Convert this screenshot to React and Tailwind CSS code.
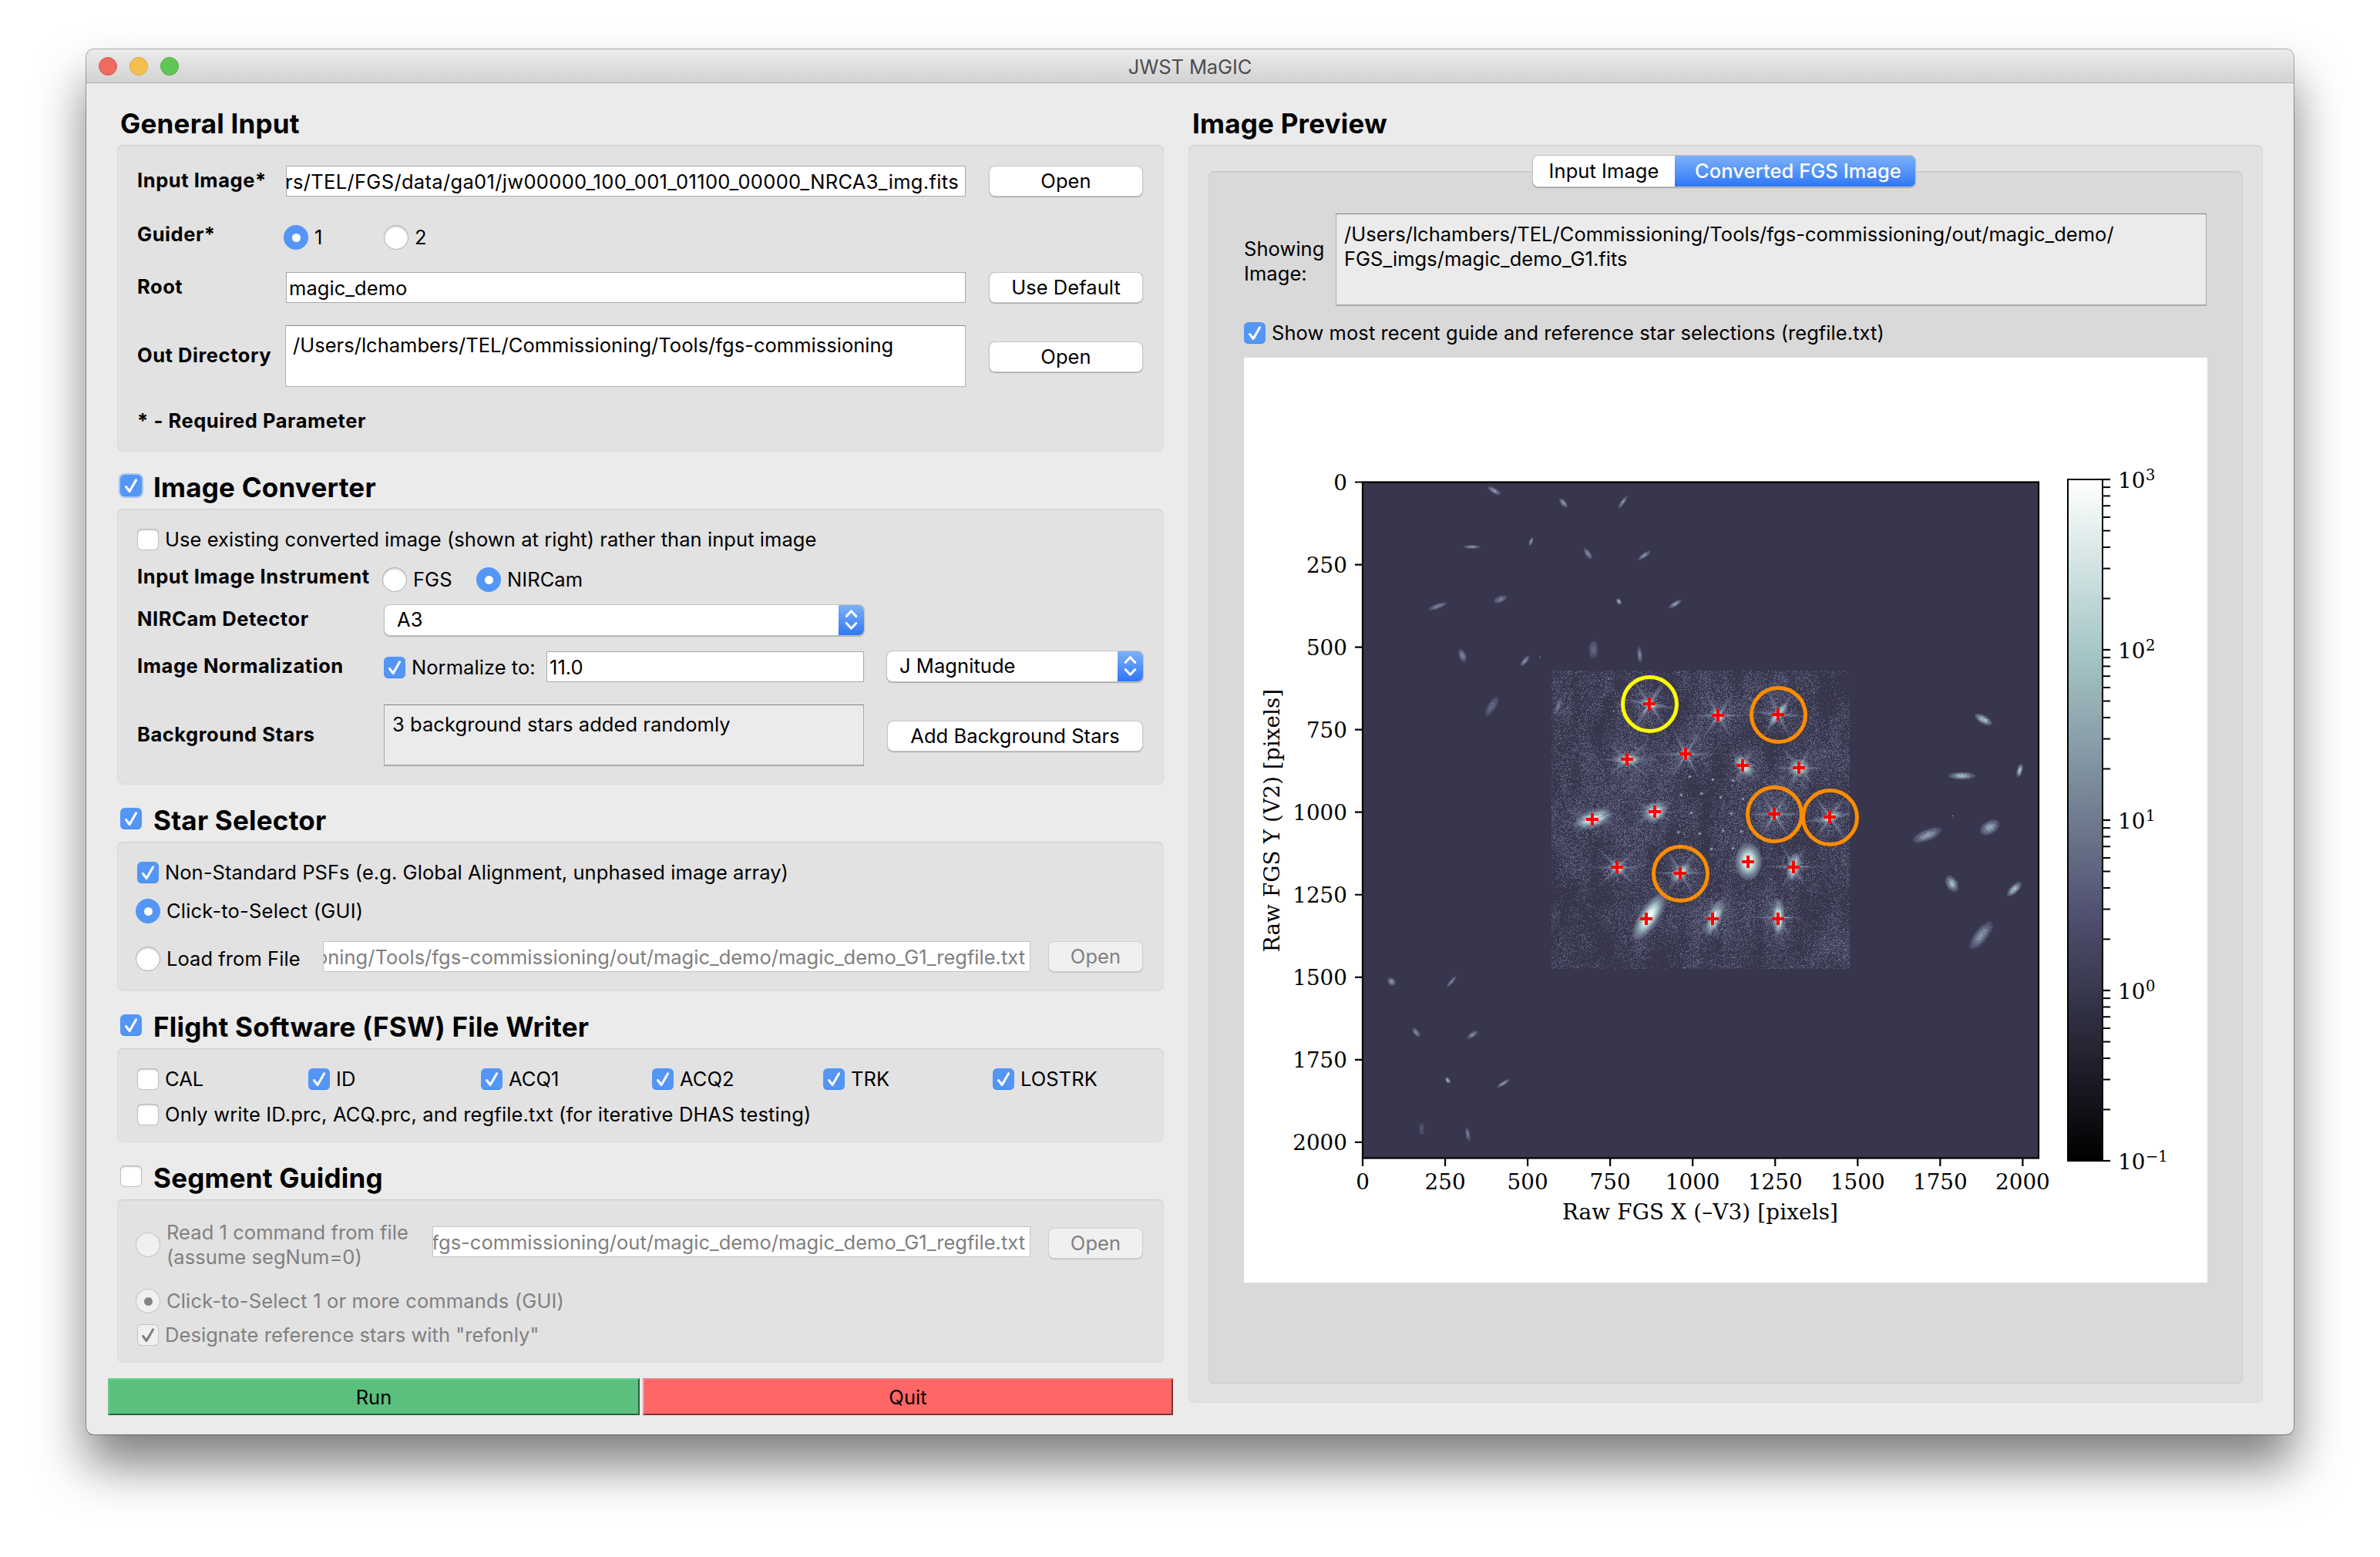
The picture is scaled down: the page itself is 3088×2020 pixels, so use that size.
import React from "react";

/* ---------- procedural star field ---------- */

const clamp = (v, lo, hi) => Math.max(lo, Math.min(hi, v));

function bone(t) {
  const lerp = (pts) => {
    for (let i = 1; i < pts.length; i++) {
      if (t <= pts[i][0]) {
        const [x0, y0] = pts[i - 1];
        const [x1, y1] = pts[i];
        return Math.round((y0 + ((t - x0) / (x1 - x0)) * (y1 - y0)) * 255);
      }
    }
    return 255;
  };
  const r = lerp([[0, 0], [0.746, 0.652], [1, 1]]);
  const g = lerp([[0, 0], [0.365, 0.319], [0.746, 0.777], [1, 1]]);
  const b = lerp([[0, 0], [0.365, 0.444], [1, 1]]);
  return `rgb(${r},${g},${b})`;
}

function hash(x, y) {
  let h = (x * 374761393 + y * 668265263) | 0;
  h = Math.imul(h ^ (h >>> 13), 1274126177);
  h ^= h >>> 16;
  return (h >>> 0) / 4294967296;
}

function smooth(x, y) {
  const xi = Math.floor(x);
  const yi = Math.floor(y);
  const fx = x - xi;
  const fy = y - yi;
  const sx = fx * fx * (3 - 2 * fx);
  const sy = fy * fy * (3 - 2 * fy);
  const a = hash(xi, yi);
  const b = hash(xi + 1, yi);
  const c = hash(xi, yi + 1);
  const d = hash(xi + 1, yi + 1);
  return a + (b - a) * sx + (c - a) * sy + (a - b - c + d) * sx * sy;
}

// x, y, long radius, short radius, rotation, peak, spike angles, spike length
const SEGMENTS = [
  [2140, 913, 11, 4.5, 18, 0.95, [-60, 55, 10, 125], 19],
  [2229, 928, 9, 6.5, 40, 0.95, [-55, 60, 0, 125], 17],
  [2307, 926, 16, 5.5, -52, 0.95, [-55, 65, 5], 18],
  [2111, 985, 16, 6, 0, 0.97, [0, 40, -40], 17],
  [2187, 978, 9, 5.5, 80, 0.85, [-58, 62, 0], 19],
  [2262, 993, 14, 8, 50, 0.95, [50, -60, 110], 14],
  [2334, 996, 12.5, 10.5, 0, 0.9, [50, -60, 0, 115], 16],
  [2067, 1062, 22, 9.5, -18, 0.97, [-15, 15, -40], 16],
  [2147, 1053, 14, 11, -25, 0.97, [-30, 30, 0], 15],
  [2302, 1056, 8, 6, 60, 0.85, [58, -58, 0, 122], 19],
  [2374, 1060, 14, 5.5, -22, 0.92, [55, -55, -10], 19],
  [2098, 1125, 9.5, 7.5, 20, 0.92, [45, -45, 0], 16],
  [2180, 1132, 13.5, 7, -42, 0.93, [-55, 60, 0], 17],
  [2268, 1117, 18, 13, 90, 1.01, [90, 60], 8],
  [2327, 1124, 16, 7.5, -80, 0.95, [0, -60, 60], 17],
  [2139, 1189, 26, 9.5, -58, 1.01, [-58], 14],
  [2224, 1190, 20, 8, -68, 0.98, [-65, 80, -50], 16],
  [2307, 1190, 20, 7, 90, 0.98, [80, 100, 0, 60], 16],
];

// x, y, long radius, short radius, rotation, brightness
const SMUDGES = [
  [1938, 636, 8, 3, 30, 0.66], [2028, 652, 6, 3, 50, 0.66], [2105, 651, 8, 2, -55, 0.68],
  [1909, 709, 9, 2, 0, 0.64], [1986, 702, 5, 2, -70, 0.7], [2060, 718, 7, 3, 55, 0.62],
  [2133, 720, 8, 2.5, -35, 0.66], [1865, 786, 11, 3, -20, 0.58], [1946, 777, 8, 4, -20, 0.54],
  [2100, 780, 4, 2.5, 60, 0.74], [2173, 783, 8, 2.5, -32, 0.68], [1897, 850, 7, 4, 70, 0.62],
  [1978, 857, 7, 2.5, -50, 0.66], [2067, 842, 11, 6, 90, 0.45], [2127, 849, 9, 3, 85, 0.58],
  [1935, 916, 14, 5, -58, 0.47], [2021, 916, 10, 3, -72, 0.55], [2573, 933, 10, 4.5, 30, 0.84],
  [2545, 1006, 14, 4, 0, 0.78], [2620, 999, 7, 3, -75, 0.86], [2500, 1083, 16, 6, -22, 0.68],
  [2581, 1073, 11, 7, -30, 0.73], [2532, 1146, 9, 6, 60, 0.8], [2613, 1153, 10, 4.5, -45, 0.8],
  [2570, 1213, 18, 7, -52, 0.64], [1805, 1273, 5, 4, 40, 0.66], [1883, 1273, 8, 2, -50, 0.62],
  [1837, 1339, 6, 3, 50, 0.62], [1910, 1342, 7, 3, -35, 0.6], [1878, 1401, 4, 2.5, 60, 0.7],
  [1950, 1405, 8, 2, -32, 0.68], [1844, 1464, 9, 4, 90, 0.38], [1904, 1471, 8, 2.5, 80, 0.56],
];

const DOTS = [
  [2192, 1007], [2222, 1011], [2248, 1012], [2181, 1031], [2207, 1029], [2232, 1034], [2261, 1036],
  [2194, 1054], [2246, 1055], [2177, 1079], [2205, 1081], [2235, 1077], [2259, 1078], [2220, 1101], [2248, 1100],
];

const HOT = [
  [2093, 922], [2220, 950], [2319, 983], [2247, 1019], [2100, 1038], [2104, 1089], [2185, 1082],
  [2200, 1128], [2315, 1112], [2353, 1226], [2393, 1231], [2181, 1237], [1998, 852], [2533, 1058],
];

const GRID = { x0: 2013, y0: 870, x1: 2400, y1: 1257 };

function rotated(x, y, cx, cy, deg) {
  const a = (deg * Math.PI) / 180;
  const dx = x - cx;
  const dy = y - cy;
  return [dx * Math.cos(a) + dy * Math.sin(a), -dx * Math.sin(a) + dy * Math.cos(a)];
}

function detectorValue(x, y) {
  const n = hash(x, y);
  const m = hash(x + 977, y + 313);
  const cloud = smooth(x / 14, y / 34) * 0.55 + smooth(x / 40 + 9, y / 56 + 3) * 0.45;
  let t = 0.25;
  const density = clamp((cloud - 0.24) * 0.9, 0.04, 0.55);
  if (n < density) t = 0.31 + m * 0.17;
  for (const [cx, cy, a, b, rot, peak, spikes, len] of SEGMENTS) {
    const dx = x - cx;
    const dy = y - cy;
    const d2 = dx * dx + dy * dy;
    if (d2 > 1900) continue;
    const [u, v] = rotated(x, y, cx, cy, rot);
    const q = (u * u) / (a * a) + (v * v) / (b * b);
    const solid = peak > 1;
    const grain = solid
      ? 0.96 - 0.08 * n
      : 0.64 + 0.36 * smooth(u / 5 + cx, v / 1.6 + cy) - 0.25 * n * Math.min(1, q);
    const body = 0.25 + (peak - 0.18) * Math.exp(-q) * grain;
    if (body > t && body > 0.38) t = body;
    const d = Math.sqrt(d2);
    for (const s of spikes) {
      const [, p] = rotated(x, y, cx, cy, s);
      const w = 0.85 * Math.exp(-d / len) * Math.exp(-Math.abs(p) / (1.3 + d * 0.05)) * (0.35 + 0.65 * n);
      if (0.25 + w > t && w > 0.09) t = 0.25 + w;
    }
    const halo = 0.36 * Math.exp(-d / 16);
    if (m < halo * 2 && 0.36 + halo * n > t) t = 0.36 + halo * n;
  }
  for (const [cx, cy] of DOTS) {
    const d2 = (x - cx) ** 2 + (y - cy) ** 2;
    if (d2 < 5) t = Math.max(t, 0.62 - d2 * 0.05);
  }
  return t;
}

function buildField() {
  const levels = 22;
  const paths = Array.from({ length: levels + 1 }, () => []);
  const put = (x, y, w, l) => paths[l].push(`M${x} ${y}h${w}v1h-${w}z`);
  const toLevel = (t) => clamp(Math.round(t * levels), 0, levels);
  for (let y = GRID.y0; y < GRID.y1; y++) {
    let run = -1;
    let start = GRID.x0;
    for (let x = GRID.x0; x <= GRID.x1; x++) {
      const t = x < GRID.x1 ? detectorValue(x, y) : 0;
      const l = t > 0.29 ? toLevel(t) : -1;
      if (l !== run) {
        if (run >= 0) put(start, y, x - start, run);
        run = l;
        start = x;
      }
    }
  }
  for (const [cx, cy, a, b, rot, peak] of SMUDGES) {
    const r = Math.ceil(a) + 3;
    for (let y = cy - r; y <= cy + r; y++) {
      for (let x = cx - r; x <= cx + r; x++) {
        const [u, v] = rotated(x, y, cx, cy, rot);
        const q = (u * u) / (a * a) + (v * v) / (b * b);
        const n = hash(x, y);
        const t = 0.25 + (peak - 0.22) * Math.exp(-q * 1.1) * (0.6 + 0.4 * n);
        if (q < 1.6 && t > 0.31) put(x, y, 1, toLevel(t));
      }
    }
  }
  for (const [x, y] of HOT) put(x, y, 1, 19);
  return paths
    .map((p, i) => ({ d: p.join(""), fill: bone(i / levels) }))
    .filter((p) => p.d);
}

const FIELD = buildField();

const CROSSES = [
  [2140, 913], [2229, 928], [2307, 927], [2111, 985], [2187, 978], [2261, 993], [2334, 996],
  [2066, 1063], [2147, 1053], [2302, 1056], [2374, 1060], [2098, 1125], [2180, 1133], [2268, 1118],
  [2327, 1125], [2136, 1192], [2222, 1192], [2307, 1192],
];

const RINGS = [
  [2140.5, 913.5, "#ffff00"], [2307.5, 927.5, "#ff8c00"], [2302.5, 1056.5, "#ff8c00"],
  [2374.5, 1060.5, "#ff8c00"], [2180.5, 1133.5, "#ff8c00"],
];

const TICKS = [0, 250, 500, 750, 1000, 1250, 1500, 1750, 2000];
const DECADES = [3, 2, 1, 0, -1];

function Plot() {
  const px = (v) => 1768 + v * 0.4282;
  const py = (v) => 625.5 + v * 0.4282;
  const minor = [];
  for (let d = 0; d < 4; d++) {
    for (let k = 2; k < 10; k++) minor.push(1506 - (d + Math.log10(k)) * 221);
  }
  return (
    <svg
      viewBox="1614 464 1250 1200"
      className="block h-[1200px] w-[1250px] bg-white font-['DejaVu_Serif',serif] text-[27.8px] tracking-normal"
    >
      <defs>
        <linearGradient id="bone" x1="0" y1="1" x2="0" y2="0">
          <stop offset="0" stopColor="#000" />
          <stop offset="0.365" stopColor="rgb(81,81,113)" />
          <stop offset="0.746" stopColor="rgb(166,198,198)" />
          <stop offset="1" stopColor="#fff" />
        </linearGradient>
      </defs>
      <rect x="1768" y="625.5" width="877" height="877" fill="#38364c" />
      <g shapeRendering="crispEdges">
        {FIELD.map((p) => (
          <path key={p.fill} d={p.d} fill={p.fill} />
        ))}
      </g>
      {CROSSES.map(([x, y]) => (
        <path key={`${x}-${y}`} d={`M${x - 8} ${y}h16M${x} ${y - 8}v16`} stroke="#ff0000" strokeWidth="4" />
      ))}
      {RINGS.map(([x, y, c]) => (
        <circle key={`${x}-${y}`} cx={x} cy={y} r="35" fill="none" stroke={c} strokeWidth="5" />
      ))}
      <rect x="1768" y="625.5" width="877" height="877" fill="none" stroke="#000" strokeWidth="2.2" />
      {TICKS.map((t) => (
        <g key={t}>
          <path d={`M${px(t)} 1503v10M1768 ${py(t)}h-10`} stroke="#000" strokeWidth="2.2" />
          <text x={px(t)} y="1543" textAnchor="middle">{t}</text>
          <text x="1748" y={py(t) + 10} textAnchor="end">{t}</text>
        </g>
      ))}
      <text x="2206" y="1582" textAnchor="middle" letterSpacing="0.15">Raw FGS X (–V3) [pixels]</text>
      <text transform="translate(1660 1064.5) rotate(-90)" textAnchor="middle" letterSpacing="0.1">Raw FGS Y (V2) [pixels]</text>
      <rect x="2683" y="622" width="45" height="884" fill="url(#bone)" stroke="#000" strokeWidth="2" />
      {minor.map((y) => (
        <path key={y} d={`M2728 ${y}h10`} stroke="#000" strokeWidth="2" />
      ))}
      {DECADES.map((d, i) => (
        <g key={d}>
          <path d={`M2728 ${622 + i * 221}h10`} stroke="#000" strokeWidth="2.2" />
          <text x="2748" y={633 + i * 221}>10</text>
          <text x="2784" y={622.5 + i * 221} fontSize="19.5">{String(d).replace("-", "−")}</text>
        </g>
      ))}
    </svg>
  );
}

/* ---------- controls ---------- */

function Check({ on, disabled, focus }) {
  let look = "bg-white shadow-[inset_0_0_0_1px_#bdbdbd,inset_0_2px_2px_#c4c4c4]";
  if (on) look = "bg-[#5496f5] shadow-[inset_0_-1px_0_#3f86ee]";
  if (on && focus) look = "bg-[#5496f5] shadow-[0_0_0_2px_#a5c6f5]";
  if (disabled) look = "bg-[#f0f0f0] shadow-[inset_0_0_0_1px_#c6c6c6]";
  return (
    <span className={`flex size-7 shrink-0 items-center justify-center rounded-[6px] ${look}`}>
      {on && (
        <svg viewBox="0 0 28 28" className="size-7" fill="none">
          <path
            d="M7.5 15.5l4.6 6L20.6 6.8"
            stroke={disabled ? "#7d7d7d" : "#fff"}
            strokeWidth="3"
            strokeLinecap="round"
            strokeLinejoin="round"
          />
        </svg>
      )}
    </span>
  );
}

function Radio({ on, disabled }) {
  let look = "bg-white shadow-[inset_0_0_0_1px_#b4b4b4,inset_0_2px_3px_#c4c4c4]";
  if (on) look = "bg-[#5496f5]";
  if (disabled) look = "bg-[#f0f0f0] shadow-[inset_0_0_0_1px_#c2c2c2]";
  return (
    <span className={`flex size-8 shrink-0 items-center justify-center rounded-full ${look}`}>
      {on && <span className={`size-[11px] rounded-full ${disabled ? "bg-[#858585]" : "bg-white"}`} />}
    </span>
  );
}

function Button({ children, className = "", disabled }) {
  const look = disabled
    ? "bg-[#f0f0f0] text-[#808080] shadow-[0_0_0_1px_#d0d0d0,0_1px_1px_1px_#bdbdbd]"
    : "bg-white shadow-[0_0_0_1px_#c6c6c6,0_1px_1px_1px_#a8a8a8]";
  return (
    <button className={`flex h-[38px] shrink-0 items-center justify-center rounded-[7px] pb-px ${look} ${className}`}>
      {children}
    </button>
  );
}

function Field({ children, className = "", disabled, end }) {
  return (
    <div
      className={`flex h-10 shrink-0 items-center overflow-hidden border bg-white ${
        end ? "justify-end" : ""
      } ${disabled ? "border-[#c4c4c4] text-[#808080]" : "border-[#a9a9a9]"} ${className}`}
    >
      <span className="shrink-0 pt-px">{children}</span>
    </div>
  );
}

function Select({ children, className = "" }) {
  return (
    <div
      className={`flex h-[39px] shrink-0 items-stretch justify-between overflow-hidden rounded-[7px] bg-white shadow-[0_0_0_1px_#c2c2c2,0_1px_1px_1px_#a8a8a8] ${className}`}
    >
      <span className="flex items-center pb-[1px] pl-4">{children}</span>
      <span className="flex w-[33px] items-center justify-center bg-linear-to-b from-[#7cb1f7] to-[#2f75f6]">
        <svg viewBox="0 0 33 40" className="h-10 w-[33px]" fill="none" stroke="#fff" strokeWidth="3" strokeLinecap="round" strokeLinejoin="round">
          <path d="M10.2 15.5l6.3-6.8 6.3 6.8M10.2 24.5l6.3 6.8 6.3-6.8" />
        </svg>
      </span>
    </div>
  );
}

function Group({ children, className = "" }) {
  return (
    <div
      className={`ml-3 w-[1358px] rounded-[8px] bg-[#e2e2e2] pl-[26px] shadow-[inset_0_1px_0_#d0d0d0,inset_0_0_0_2px_#dedede] ${className}`}
    >
      {children}
    </div>
  );
}

function Heading({ children, className = "", check }) {
  return (
    <div className={`flex h-11 items-center text-[35px] font-bold tracking-[0.22px] ${className}`}>
      {check && <span className="mr-[15px] pb-[4px]">{check}</span>}
      {children}
    </div>
  );
}

const Label = ({ children, className = "" }) => (
  <span className={`shrink-0 pb-[3px] font-bold tracking-[0.55px] ${className}`}>{children}</span>
);

const Option = ({ control, children, className = "" }) => (
  <div className={`flex shrink-0 items-center gap-[8px] ${className}`}>
    {control}
    <span className="whitespace-pre">{children}</span>
  </div>
);

export default function App() {
  return (
    <div className="h-[2020px] w-[3088px] overflow-hidden bg-white pl-[112px] pt-16 font-['Inter',sans-serif] text-[25.5px] leading-8 tracking-[0.06px] text-black">
      <div className="flex h-[1797px] w-[2864px] flex-col overflow-hidden rounded-[10px] bg-[#ebebeb] shadow-[0_0_0_1px_rgba(0,0,0,0.3),0_40px_64px_rgba(0,0,0,0.5)]">
        <header className="grid h-11 shrink-0 grid-cols-[1fr_auto_1fr] items-center border-b border-[#b0b0b0] bg-linear-to-b from-[#ececec] to-[#d2d2d2] px-4">
          <div className="flex gap-4">
            <span className="size-6 rounded-full border border-[#d9584f] bg-[#ed6b60]" />
            <span className="size-6 rounded-full border border-[#dba744] bg-[#f5bf50]" />
            <span className="size-6 rounded-full border border-[#52ab43] bg-[#62c655]" />
          </div>
          <h1 className="pt-[2px] tracking-[-0.1px] text-[#4d4d4d]">JWST MaGIC</h1>
        </header>

        <main className="flex pl-7">
          <section className="w-[1382px]">
            <Heading className="mt-[30px] pl-4">General Input</Heading>
            <Group className="mt-[6px] h-[398px] pt-[27px]">
              <div className="flex h-10 items-center">
                <Label className="w-[193px]">Input Image*</Label>
                <Field end className="w-[882px] pr-2 tracking-[0.33px]">rs/TEL/FGS/data/ga01/jw00000_100_001_01100_00000_NRCA3_img.fits</Field>
                <Button className="ml-[31px] w-[198px]">Open</Button>
              </div>
              <div className="mt-[37px] flex h-8 items-center">
                <Label className="w-[190px] pb-[8px]">Guider*</Label>
                <Option control={<Radio on />} className="w-[130px]">1</Option>
                <Option control={<Radio />}>2</Option>
              </div>
              <div className="mt-[29px] flex h-10 items-center">
                <Label className="w-[193px]">Root</Label>
                <Field className="w-[882px] pl-[3px]">magic_demo</Field>
                <Button className="ml-[31px] w-[198px]">Use Default</Button>
              </div>
              <div className="mt-[29px] flex h-20 items-center">
                <Label className="w-48 pb-0 pt-px">Out Directory</Label>
                <div className="h-20 w-[883px] border border-[#b0b0b0] border-t-[#8c8c8c] bg-white pl-[9px] pt-[9px] tracking-[0.02px]">
                  /Users/lchambers/TEL/Commissioning/Tools/fgs-commissioning
                </div>
                <Button className="ml-[31px] mt-[2px] w-[198px]">Open</Button>
              </div>
              <div className="mt-[29px] flex h-8 items-center">
                <Label>* - Required Parameter</Label>
              </div>
            </Group>

            <Heading className="mt-6 pl-4" check={<Check on focus />}>Image Converter</Heading>
            <Group className="mt-[6px] h-[358px] pt-6">
              <Option control={<Check />} className="h-8">
                Use existing converted image (shown at right) rather than input image
              </Option>
              <div className="mt-5 flex h-8 items-center">
                <Label className="w-[318px] pb-[9px]">Input Image Instrument</Label>
                <Option control={<Radio />} className="w-[122px]">FGS</Option>
                <Option control={<Radio on />}>NIRCam</Option>
              </div>
              <div className="mt-4 flex h-10 items-center">
                <Label className="w-[321px] pb-0">NIRCam Detector</Label>
                <Select className="w-[622px]">A3</Select>
              </div>
              <div className="mt-[21px] flex h-10 items-center">
                <Label className="w-[320px]">Image Normalization</Label>
                <Option control={<Check on />} className="w-[211px] pt-px">Normalize to:</Option>
                <Field className="w-[412px] pl-[3px]">11.0</Field>
                <Select className="mb-[2px] ml-[30px] w-[332px]">J Magnitude</Select>
              </div>
              <div className="mt-[29px] flex h-20 items-center">
                <Label className="w-[320px] pb-0">Background Stars</Label>
                <div className="h-20 w-[623px] border border-b-2 border-[#a9a9a9] border-t-[#808080] bg-[#ebebeb] pl-[10px] pt-[9px]">
                  3 background stars added randomly
                </div>
                <Button className="ml-[31px] mt-[2px] w-[330px]">Add Background Stars</Button>
              </div>
            </Group>

            <Heading className="mt-6 pl-4" check={<Check on />}>Star Selector</Heading>
            <Group className="mt-[6px] h-[194px] pt-6">
              <Option control={<Check on />} className="h-8">
                Non-Standard PSFs (e.g. Global Alignment, unphased image array)
              </Option>
              <Option control={<Radio on />} className="-ml-[2px] mt-[18px] h-8 tracking-[0.2px]">Click-to-Select (GUI)</Option>
              <div className="mt-[23px] flex h-10 items-center">
                <Option control={<Radio />} className="-ml-[2px] w-[243px] pt-[6px]">Load from File</Option>
                <Field disabled end className="w-[918px] pr-[6px] tracking-normal">oning/Tools/fgs-commissioning/out/magic_demo/magic_demo_G1_regfile.txt</Field>
                <Button disabled className="ml-6 w-[121px]">Open</Button>
              </div>
            </Group>

            <Heading className="mt-6 pl-4" check={<Check on />}>Flight Software (FSW) File Writer</Heading>
            <Group className="mt-[6px] h-[122px] pt-6">
              <div className="flex h-8">
                <Option control={<Check />} className="w-[222px]">CAL</Option>
                <Option control={<Check on />} className="w-[224px]">ID</Option>
                <Option control={<Check on />} className="w-[222px]">ACQ1</Option>
                <Option control={<Check on />} className="w-[222px]">ACQ2</Option>
                <Option control={<Check on />} className="w-[220px]">TRK</Option>
                <Option control={<Check on />}>LOSTRK</Option>
              </div>
              <Option control={<Check />} className="mt-[14px] h-8 tracking-[0.16px]">
                Only write ID.prc, ACQ.prc, and regfile.txt (for iterative DHAS testing)
              </Option>
            </Group>

            <Heading className="mt-6 pl-4" check={<Check />}>Segment Guiding</Heading>
            <Group className="mt-[6px] h-[212px] pt-[26px] text-[#808080]">
              <div className="flex h-16 items-center">
                <Option control={<Radio disabled />} className="-ml-[2px] w-[385px] pt-px">
                  {"Read 1 command from file\n(assume segNum=0)"}
                </Option>
                <Field disabled end className="mb-[6px] w-[776px] pr-[6px] tracking-normal">fgs-commissioning/out/magic_demo/magic_demo_G1_regfile.txt</Field>
                <Button disabled className="mb-[2px] ml-6 w-[121px]">Open</Button>
              </div>
              <Option control={<Radio on disabled />} className="-ml-[2px] mt-[26px] h-8 tracking-[0.16px]">Click-to-Select 1 or more commands (GUI)</Option>
              <Option control={<Check on disabled />} className="mt-3 h-8">Designate reference stars with "refonly"</Option>
            </Group>

            <div className="mt-5 flex h-12 gap-1">
              <button className="w-[690px] border-2 border-b-[#2d6040] border-l-[#63cd8b] border-r-[#2d6040] border-t-[#63d48c] bg-[#5bbf7e] pt-px">Run</button>
              <button className="w-[688px] border-2 border-b-[#803333] border-l-[#ff8a8a] border-r-[#803333] border-t-[#f08080] bg-[#ff6666] pt-px">Quit</button>
            </div>
          </section>

          <section className="ml-5">
            <Heading className="mt-[30px] pl-[5px]">Image Preview</Heading>
            <div className="mt-[6px] h-[1632px] w-[1394px] rounded-[8px] bg-[#e2e2e2] pl-[26px] pt-[34px] shadow-[inset_0_1px_0_#d0d0d0,inset_0_0_0_2px_#dedede]">
              <div className="flex h-[1574px] w-[1342px] flex-col rounded-[8px] bg-[#d9d9d9] pl-[46px] shadow-[inset_0_1px_0_#c6c6c6,inset_0_0_0_2px_#d4d4d4]">
                <div className="-mt-5 ml-[375px] flex h-10 w-[496px] shrink-0 overflow-hidden rounded-[7px] shadow-[0_0_0_1px_#c2c2c2,0_1px_1px_1px_#a0a0a0]">
                  <span className="flex w-[184px] items-center justify-center bg-white">Input Image</span>
                  <span className="flex flex-1 items-center justify-center bg-linear-to-b from-[#7cb1f7] to-[#2f75f6] pl-2 font-medium text-white">Converted FGS Image</span>
                </div>
                <div className="mt-[35px] flex h-[120px] shrink-0 items-center">
                  <span className="w-[119px] pb-[1px] pt-1">Showing<br />Image:</span>
                  <div className="h-[120px] w-[1130px] border border-b-2 border-[#a9a9a9] border-t-[#808080] bg-[#ebebeb] pl-[10px] pt-[10px] tracking-[0.02px]">
                    /Users/lchambers/TEL/Commissioning/Tools/fgs-commissioning/out/magic_demo/
                    <br />
                    FGS_imgs/magic_demo_G1.fits
                  </div>
                </div>
                <Option control={<Check on />} className="mt-[19px] h-8">
                  Show most recent guide and reference star selections (regfile.txt)
                </Option>
                <div className="mt-4">
                  <Plot />
                </div>
              </div>
            </div>
          </section>
        </main>
      </div>
    </div>
  );
}
